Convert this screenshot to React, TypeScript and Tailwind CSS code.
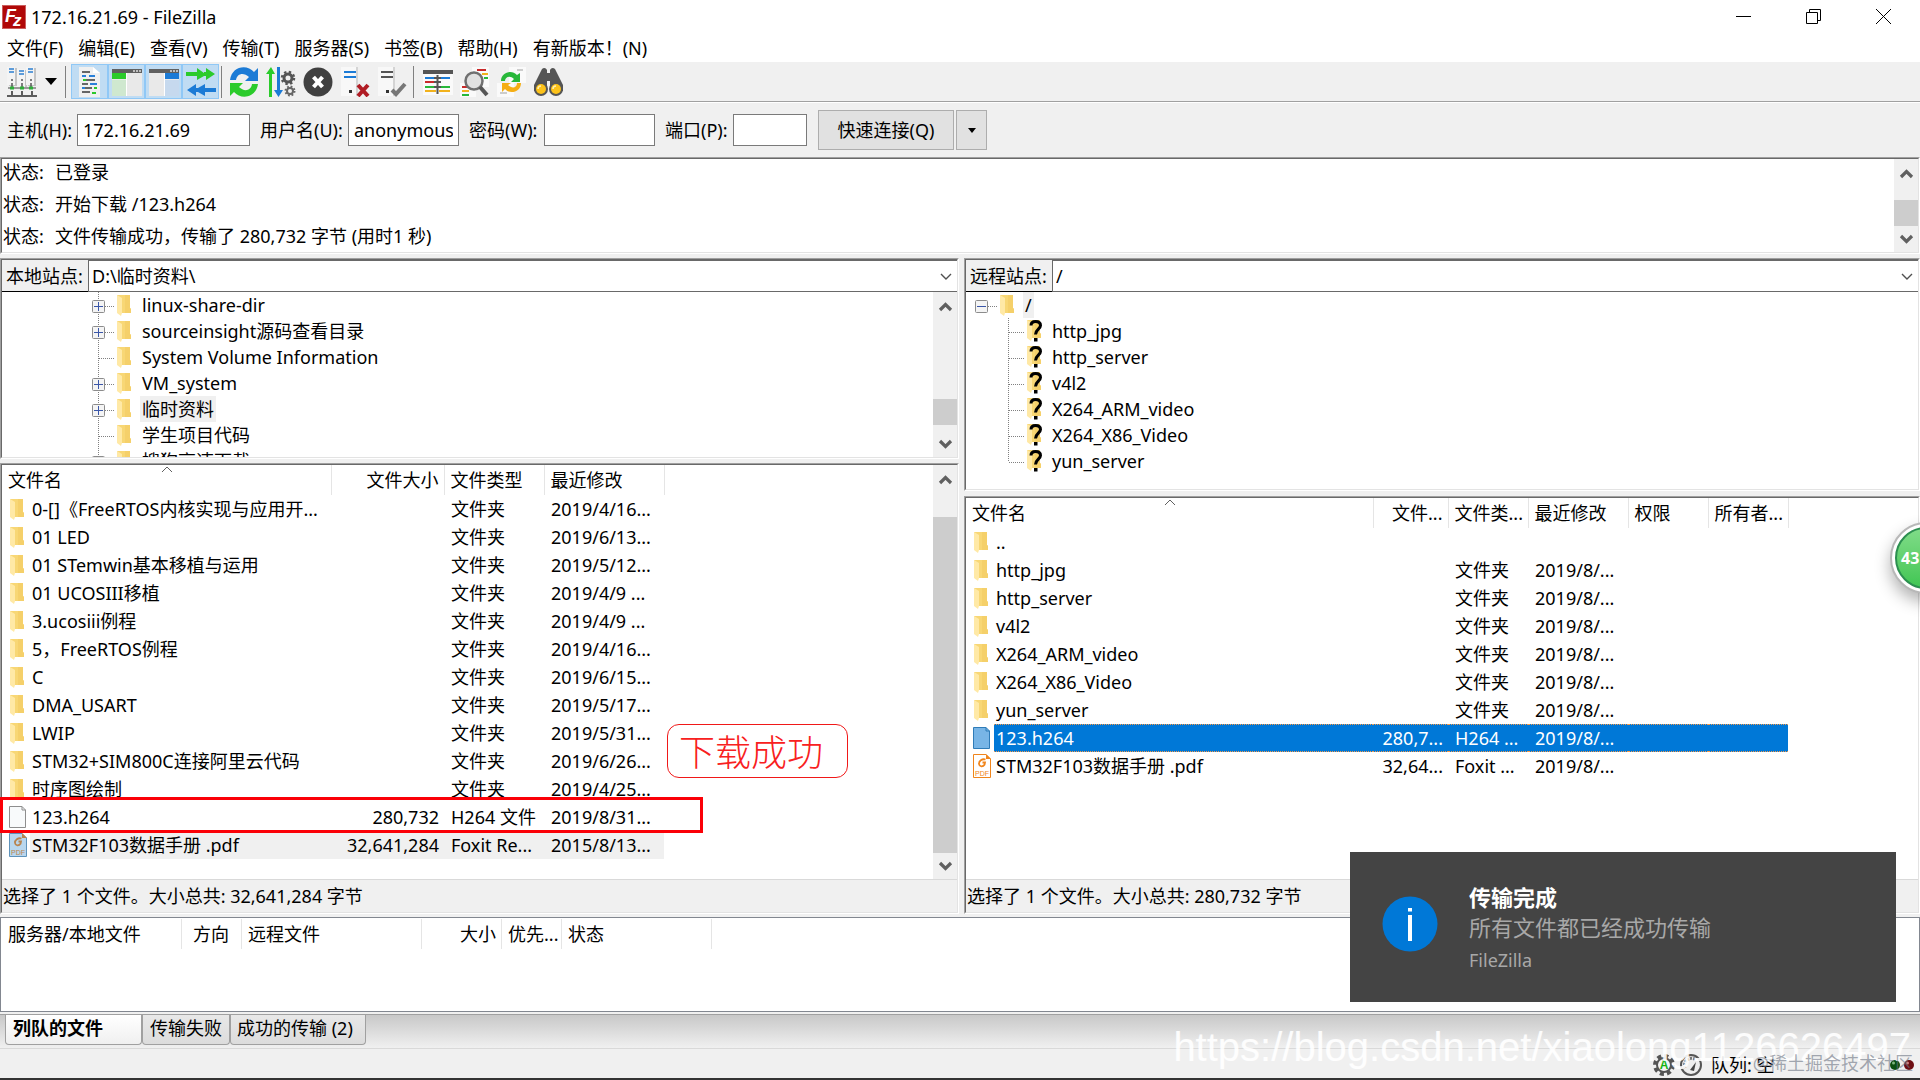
import React from "react";

type Kind = "folder" | "file" | "fileSelected" | "pdf" | "pdfSelected";

function FolderShape() {
  return (
    <>
      <path d="M0 0H13V13L14 14V18H4Z" fill="#f8d775" />
      <path d="M8 0H13V13L14 14V18H8Z" fill="#f5d06a" />
      <path d="M0 0L5 3V18L4 21L0 18Z" fill="#ffe9a6" />
    </>
  );
}

function FolderIcon() {
  return (
    <svg width="16" height="22" viewBox="0 -1 16 22" className="shrink-0" aria-hidden="true">
      <FolderShape />
    </svg>
  );
}

function UnknownFolderIcon() {
  return (
    <svg width="16" height="22" viewBox="0 0 16 22" className="shrink-0" aria-hidden="true">
      <FolderShape />
      <path d="M4 5.5C4 2.5 6 1.5 8.5 1.5C11.500 1.500 13.500 3 13.500 5.500C13.500 9 8.500 9.500 8.500 14.500" fill="none" stroke="#000" strokeWidth="3" />
      <rect x="7" y="18" width="3.500" height="3.500" fill="#000" />
    </svg>
  );
}

function FileIcon({ kind }: { kind: Kind }) {
  if (kind === "folder") return <FolderIcon />;
  if (kind === "file" || kind === "fileSelected") {
    const sel = kind === "fileSelected";
    return (
      <svg width="18" height="22" viewBox="0 0 18 22" className="shrink-0" aria-hidden="true">
        <path d="M.5 .5H13L16.500 4V21.500H.5Z" fill={sel ? "#78b5e6" : "#f8fafb"} stroke={sel ? "#2f7cb8" : "#8e8e8e"} />
        <path d="M13 .5V4H16.500" fill="none" stroke={sel ? "#2f7cb8" : "#8e8e8e"} />
      </svg>
    );
  }
  const sel = kind === "pdfSelected";
  const ink = sel ? "#b98550" : "#f0851c";
  return (
    <svg width="18" height="24" viewBox="0 0 18 24" className="shrink-0" aria-hidden="true">
      <path d="M.5 .5H13L17.500 5V23.500H.5Z" fill={sel ? "#b9d7ee" : "#fff"} stroke={sel ? "#5f93bb" : ink} />
      <path d="M13 0V5H18Z" fill={ink} />
      <path d="M12.500 5.500C9 4.500 5.800 7 6 10C6.300 12.800 10 13 11.500 10.800L12 8.500H9.500" fill="none" stroke={ink} strokeWidth="1.800" />
      <text x="9" y="22" fontSize="7" textAnchor="middle" fill={ink} fontFamily="Liberation Sans">PDF</text>
    </svg>
  );
}

function Connector({ box, line = "full" }: { box?: "plus" | "minus"; line?: "full" | "half" | "none" }) {
  return (
    <svg width="25" height="26" viewBox="0 0 25 26" className="shrink-0" aria-hidden="true">
      {line !== "none" && <path d={line === "full" ? "M6.500 0V26" : "M6.500 0V14"} stroke="#808080" strokeDasharray="1 1" />}
      <path d="M7 14.500H22" stroke="#808080" strokeDasharray="1 1" />
      {box && (
        <>
          <rect x=".5" y="8.500" width="12" height="12" rx="1" fill="#f4f4f4" stroke="#8c8c8c" />
          <path d={box === "plus" ? "M2 14.500H11M6.500 10V19" : "M2 14.500H11"} stroke="#3a56a8" />
        </>
      )}
    </svg>
  );
}

function Frame({ className = "", children }: { className?: string; children: React.ReactNode }) {
  return (
    <div className={`flex flex-col border border-t-[#a0a0a0] border-l-[#a0a0a0] border-r-white border-b-white ${className}`}>
      <div className="flex min-h-0 flex-1 flex-col border border-t-[#696969] border-l-[#696969] border-r-[#e3e3e3] border-b-[#e3e3e3] bg-white">
        {children}
      </div>
    </div>
  );
}

function ArrowUp() {
  return (
    <svg width="24" height="28" viewBox="0 0 24 28" className="block shrink-0" aria-hidden="true">
      <path d="M7 18L12.500 12.500L18 18" fill="none" stroke="#606060" strokeWidth="3.200" />
    </svg>
  );
}

function ArrowDown() {
  return (
    <svg width="24" height="26" viewBox="0 0 24 26" className="block shrink-0" aria-hidden="true">
      <path d="M7 10L12.500 15.500L18 10" fill="none" stroke="#606060" strokeWidth="3.200" />
    </svg>
  );
}

function Scrollbar({ before, thumb, after }: { before: string; thumb: string; after: string }) {
  return (
    <div className="flex w-6 shrink-0 flex-col bg-[#f0f0f0]">
      <ArrowUp />
      <div className={before} />
      <div className={`bg-[#cdcdcd] ${thumb}`} />
      <div className={after} />
      <ArrowDown />
    </div>
  );
}

function SiteRow({ id, label, value }: { id: string; label: string; value: string }) {
  return (
    <div className="flex h-8 shrink-0">
      <label htmlFor={id} className="flex w-[86px] items-center border-b border-black bg-[#f0f0f0] pl-1">{label}</label>
      <div className="relative flex-1 border-y border-l border-[#696969]">
        <select id={id} className="h-full w-full appearance-none bg-transparent pl-[3px]" defaultValue={value}>
          <option>{value}</option>
        </select>
        <svg width="12" height="8" viewBox="0 0 12 8" className="pointer-events-none absolute top-3 right-[5px]" aria-hidden="true">
          <path d="M1 1L6 6L11 1" fill="none" stroke="#505050" strokeWidth="1.400" />
        </svg>
      </div>
    </div>
  );
}

const localTree: { name: string; plus?: boolean; current?: boolean }[] = [
  { name: "linux-share-dir", plus: true },
  { name: "sourceinsight源码查看目录", plus: true },
  { name: "System Volume Information" },
  { name: "VM_system", plus: true },
  { name: "临时资料", plus: true, current: true },
  { name: "学生项目代码" },
  { name: "搜狗高速下载", plus: true },
];
const remoteTree = ["http_jpg", "http_server", "v4l2", "X264_ARM_video", "X264_X86_Video", "yun_server"];

type Row = { kind: Kind; name: string; cells: string[] };
const dir = (name: string, date: string): Row => ({ kind: "folder", name, cells: ["", "文件夹", date] });

const localRows: Row[] = [
  dir("0-[]《FreeRTOS内核实现与应用开...", "2019/4/16..."),
  dir("01 LED", "2019/6/13..."),
  dir("01 STemwin基本移植与运用", "2019/5/12..."),
  dir("01 UCOSIII移植", "2019/4/9 ..."),
  dir("3.ucosiii例程", "2019/4/9 ..."),
  dir("5，FreeRTOS例程", "2019/4/16..."),
  dir("C", "2019/6/15..."),
  dir("DMA_USART", "2019/5/17..."),
  dir("LWIP", "2019/5/31..."),
  dir("STM32+SIM800C连接阿里云代码", "2019/6/26..."),
  dir("时序图绘制", "2019/4/25..."),
  { kind: "file", name: "123.h264", cells: ["280,732", "H264 文件", "2019/8/31..."] },
  { kind: "pdfSelected", name: "STM32F103数据手册 .pdf", cells: ["32,641,284", "Foxit Re...", "2015/8/13..."] },
];
const remoteRows: Row[] = [
  { kind: "folder", name: "..", cells: ["", "", "", "", ""] },
  ...remoteTree.map((n): Row => ({ kind: "folder", name: n, cells: ["", "文件夹", "2019/8/...", "", ""] })),
  { kind: "fileSelected", name: "123.h264", cells: ["280,7...", "H264 ...", "2019/8/...", "", ""] },
  { kind: "pdf", name: "STM32F103数据手册 .pdf", cells: ["32,64...", "Foxit ...", "2019/8/...", "", ""] },
];

function FileTable({ heads, cols, rows }: { heads: string[]; cols: string[]; rows: Row[] }) {
  return (
    <table className="w-full table-fixed border-collapse">
      <colgroup>
        {cols.map((c, i) => <col key={i} className={c} />)}
        <col />
      </colgroup>
      <thead>
        <tr className="h-[30px]">
          {heads.map((h, i) => (
            <th key={h} className={`relative overflow-hidden border-r border-[#e5e5e5] p-0 font-normal whitespace-nowrap ${i === 1 ? "pr-[5px] text-right" : "pl-[6px] text-left"}`}>
              {h}
              {i === 0 && (
                <svg width="12" height="7" viewBox="0 0 12 7" className="absolute top-px left-1/2 -ml-[5px]" aria-hidden="true">
                  <path d="M1 6L6 1L11 6" fill="none" stroke="#606060" />
                </svg>
              )}
            </th>
          ))}
          <th className="p-0" />
        </tr>
      </thead>
      <tbody>
        {rows.map((r) => {
          const tone =
            r.kind === "fileSelected" ? "bg-[#0078d7] text-white border-y border-dotted border-[#f59a4a]" : r.kind === "pdfSelected" ? "bg-[#f0f0f0]" : "";
          return (
            <tr key={r.name} className="h-7">
              <td className="p-0">
                <div className="flex h-7 items-center">
                  <span className={`flex w-7 shrink-0 ${r.kind === "folder" ? "pl-2" : "pl-[7px]"}`}><FileIcon kind={r.kind} /></span>
                  <span className={`flex h-7 flex-1 items-center overflow-hidden pl-[2px] whitespace-nowrap ${tone}`}>{r.name}</span>
                </div>
              </td>
              {r.cells.map((c, i) => (
                <td key={i} className="p-0">
                  <div className={`flex h-7 items-center overflow-hidden whitespace-nowrap ${tone} ${i === 0 ? "justify-end pr-[5px]" : "pl-[7px]"}`}>{c}</div>
                </td>
              ))}
              <td className="p-0" />
            </tr>
          );
        })}
      </tbody>
    </table>
  );
}

function ToolIcon({ name }: { name: string }) {
  let body: React.ReactNode = null;
  switch (name) {
    case "站点管理器":
      body = (
        <>
          {[1, 11, 20].map((x, i) => (
            <g key={x}>
              <path d={`M${x + 1} ${i === 1 ? 3 : 1}h8v18h-8z`} fill="#c4c4c4" />
              <path d={`M${x - 1} ${i === 1 ? 2 : 0}h8v18h-8z`} fill="#f4f4f4" />
              <path d={`M${x + 1} ${i === 1 ? 4 : 2}h5M${x + 1} ${i === 1 ? 7 : 5}h5`} stroke="#2c7fd0" strokeWidth="1.500" />
              <path d={`M${x + 4} 12v2M${x + 4} 16v4`} stroke="#555" strokeWidth="1.500" />
            </g>
          ))}
          <path d="M1 21H29" stroke="#999" strokeWidth="2" />
          <path d="M3 21H7M13 21H17M22 21H26" stroke="#2fae3a" strokeWidth="3" />
          <path d="M0 29H30M5 29V24M15 29V24M25 29V24" stroke="#5c5c5c" strokeWidth="2" fill="none" />
        </>
      );
      break;
    case "消息日志":
      body = (
        <>
          <path d="M4 0H18L25 6V30H4Z" fill="#f0f0f0" />
          <path d="M18 0V6H25Z" fill="#fff" />
          <path d="M7 5h8M11 13h9M7 17h6M9 21h8M7 25h8" stroke="#666" strokeWidth="2" />
          <path d="M7 9h4M14 9h6M15 17h7M7 21h3" stroke="#2a80d8" strokeWidth="2" />
          <path d="M8 13h3M19 21h3M17 26h4" stroke="#2cc82c" strokeWidth="2" />
        </>
      );
      break;
    case "本地目录树":
    case "远程目录树": {
      const local = name === "本地目录树";
      body = (
        <>
          <path d="M0 2H30V29H0Z" fill="#e9e9e9" />
          <path d="M0 2H30V6H0Z" fill="#606060" />
          <path d="M21 4h2M24 4h2M27 4h2" stroke="#ddd" strokeWidth="1.500" />
          {local ? (
            <>
              <path d="M0 6H14V12H0Z" fill="#2bcb2b" />
              <path d="M0 13H14V29H0Z" fill="#cfe8cf" />
              <path d="M14.500 6V29" stroke="#fff" />
            </>
          ) : (
            <>
              <path d="M15 6H30V12H15Z" fill="#1c7bd6" />
              <path d="M16 13H30V29H16Z" fill="#c6d9ee" />
              <path d="M15.500 6V29" stroke="#fff" />
            </>
          )}
        </>
      );
      break;
    }
    case "传输队列":
      body = (
        <>
          <path d="M0 5H11V1L18 6V5H20V1L29 7L20 13V9H18L11 13V9H0Z" fill="#2bcb2b" />
          <path d="M30 21H19V17L12 21V21H10V17L1 23L10 29V25H12L19 29V25H30Z" fill="#1c7bd6" />
        </>
      );
      break;
    case "刷新":
      body = (
        <>
          <path d="M1 13C3 -1 18 -3 25 5L29 1V14H16L20 10C15 5 8 6 7 13Z" fill="#1c7bd6" />
          <path d="M29 17C27 31 12 33 5 25L1 29V16H14L10 20C15 25 22 24 23 17Z" fill="#2bcb2b" />
        </>
      );
      break;
    case "处理队列":
      body = (
        <>
          <path d="M3 30V7H0L5 0L9 7H6V30Z" fill="#2bcb2b" />
          <path d="M11 0H14V23H17L12.500 30L8 23H11Z" fill="#1c7bd6" />
          <circle cx="22" cy="11" r="4" fill="none" stroke="#555" strokeWidth="3" />
          <circle cx="22" cy="11" r="6" fill="none" stroke="#555" strokeWidth="2.500" strokeDasharray="2.360 2.360" />
          <circle cx="24" cy="24" r="3" fill="none" stroke="#666" strokeWidth="2" />
          <circle cx="24" cy="24" r="4.500" fill="none" stroke="#666" strokeWidth="2" strokeDasharray="1.770 1.770" />
        </>
      );
      break;
    case "取消":
      body = (
        <>
          <circle cx="15" cy="15" r="14.500" fill="#404040" />
          <path d="M10.500 10L19.500 20M19.500 10L10.500 20" stroke="#fff" strokeWidth="4" />
        </>
      );
      break;
    case "断开连接":
    case "重新连接": {
      const off = name === "断开连接";
      body = (
        <>
          <path d="M2 0H18V29H2Z" fill="#d4d4d4" />
          <path d="M1 0H16V29H1Z" fill="#f8f8f8" />
          <path d="M4 5H16M4 10H16" stroke={off ? "#1c7bd6" : "#555"} strokeWidth="2" />
          <rect x="9" y="23" width="3" height="3" fill="#333" />
          {off ? (
            <path d="M18 18L28 29M28 18L18 29" stroke="#b01c24" strokeWidth="4" />
          ) : (
            <path d="M15 23L19 27L28 17" fill="none" stroke="#777" strokeWidth="4" />
          )}
        </>
      );
      break;
    }
    case "目录比较":
      body = (
        <>
          <path d="M0 3H30V28H0Z" fill="#fafafa" />
          <path d="M0 3H30V7H0Z" fill="#555" />
          <path d="M2 11H13M16 11H27" stroke="#1c7bd6" strokeWidth="2" />
          <path d="M2 15H13" stroke="#c92a2a" strokeWidth="2" />
          <path d="M16 20H27" stroke="#28b83a" strokeWidth="2" />
          <path d="M2 20H13" stroke="#28b83a" strokeWidth="2" />
          <path d="M2 24H13M16 24H27" stroke="#f2b21c" strokeWidth="2" />
          <path d="M14.500 8V27M11 11H18M11 15H18M11 20H18" stroke="#555" strokeWidth="2" />
        </>
      );
      break;
    case "过滤器":
      body = (
        <>
          <path d="M12 0H29V20H12ZM0 16H16V30H0Z" fill="#fafafa" />
          <path d="M17 3H26M2 20H8" stroke="#c92a2a" strokeWidth="2" />
          <path d="M22 7H28M2 24H9" stroke="#f2b21c" strokeWidth="2" />
          <path d="M24 11H28M2 28H9" stroke="#28b83a" strokeWidth="2" />
          <circle cx="14" cy="14" r="8.500" fill="#dedede" fillOpacity=".9" stroke="#707070" strokeWidth="2.500" />
          <path d="M20 20L27 28" stroke="#555" strokeWidth="4" />
        </>
      );
      break;
    case "同步浏览":
      body = (
        <>
          <path d="M12 0H29V16H12ZM0 16H17V30H0Z" fill="#fafafa" />
          <path d="M20 3H26M3 26H10" stroke="#ccc" strokeWidth="2" />
          <path d="M4 14C4 5 15 2 20 8L23 6V15H14L17 12C13 8 8 10 8 14Z" fill="#28b83a" />
          <path d="M24 16C24 25 13 28 8 22L5 25V16H14L11 18C15 22 20 21 20 16Z" fill="#f5ae14" />
        </>
      );
      break;
    case "查找文件":
      body = (
        <>
          <path d="M8 2C10 0 12 1 13 3V6H16V3C17 1 19 0 21 2L29 18V24H16V14H13V24H0V18Z" fill="#555" />
          <circle cx="7" cy="22" r="7" fill="#555" />
          <circle cx="22" cy="22" r="7" fill="#555" />
          <circle cx="7" cy="22" r="5" fill="#fcc21a" />
          <circle cx="22" cy="22" r="5" fill="#fcc21a" />
          <path d="M4 22A3 3 0 0 1 7 19M19 22A3 3 0 0 1 22 19" stroke="#fff0b0" strokeWidth="1.500" fill="none" />
        </>
      );
      break;
  }
  return (
    <svg width="30" height="30" viewBox="0 0 30 30" aria-hidden="true">{body}</svg>
  );
}

function ToolButton({ name, pressed }: { name: string; pressed?: boolean }) {
  return (
    <button type="button" aria-label={name} title={name} className={`flex h-[35px] w-[37px] items-center justify-center ${pressed ? "border border-[#90c8f6] bg-[#c0dcf3]" : ""}`}>
      <ToolIcon name={name} />
    </button>
  );
}

function Field({ id, label, labelWidth, width, value }: { id: string; label: string; labelWidth: string; width: string; value: string }) {
  return (
    <div className="flex items-center">
      <label htmlFor={id} className={`${labelWidth} whitespace-nowrap`}>{label}</label>
      <input id={id} defaultValue={value} className={`h-8 border border-[#7a7a7a] bg-white px-[5px] outline-none ${width}`} />
    </div>
  );
}

const menus = ["文件(F)", "编辑(E)", "查看(V)", "传输(T)", "服务器(S)", "书签(B)", "帮助(H)", "有新版本！(N)"];
const logs = ["已登录", "开始下载 /123.h264", "文件传输成功，传输了 280,732 字节 (用时1 秒)"];
const queueHeads = [
  { t: "服务器/本地文件", c: "w-[181px] pl-[7px]" },
  { t: "方向", c: "w-[60px] justify-end pr-3" },
  { t: "远程文件", c: "w-[180px] pl-[6px]" },
  { t: "大小", c: "w-20 justify-end pr-[5px]" },
  { t: "优先...", c: "w-[60px] pl-[6px]" },
  { t: "状态", c: "w-[150px] pl-[6px]" },
];

export default function App() {
  return (
    <div className="relative flex h-screen flex-col overflow-hidden bg-[#f0f0f0] font-['Noto_Sans','Noto_Sans_CJK_SC',sans-serif] text-[18px] leading-6 text-black">
      <header className="bg-white">
        <div className="flex h-[33px] items-center pl-[2px]">
          <svg width="24" height="24" viewBox="0 0 24 24" aria-hidden="true">
            <rect width="24" height="24" fill="#b00808" />
            <rect x=".5" y=".5" width="23" height="23" fill="none" stroke="#fff" strokeOpacity=".7" strokeDasharray="1 1" />
            <text x="3" y="17" fontSize="18" fontWeight="700" fontStyle="italic" fill="#fff" fontFamily="Liberation Sans">F</text>
            <text x="11" y="21" fontSize="17" fontWeight="700" fontStyle="italic" fill="#fff" fontFamily="Liberation Sans">z</text>
          </svg>
          <h1 className="ml-[5px] flex-1">172.16.21.69 - FileZilla</h1>
          <div className="flex pr-[2px]">
            <button type="button" aria-label="最小化" className="flex h-8 w-[70px] items-center justify-center">
              <svg width="15" height="15" viewBox="0 0 15 15"><path d="M0 7.500H15" stroke="#000" /></svg>
            </button>
            <button type="button" aria-label="还原" className="flex h-8 w-[70px] items-center justify-center">
              <svg width="15" height="15" viewBox="0 0 15 15" fill="none" stroke="#000"><path d="M.5 3.500H11.500V14.500H.5ZM3.500 3.500V.5H14.500V11.500H11.500" /></svg>
            </button>
            <button type="button" aria-label="关闭" className="flex h-8 w-[70px] items-center justify-center">
              <svg width="15" height="15" viewBox="0 0 15 15" stroke="#000"><path d="M0 0L15 15M15 0L0 15" /></svg>
            </button>
          </div>
        </div>
        <nav className="flex h-[29px] items-center gap-[15px] pl-[7px]">
          {menus.map((m) => <button key={m} type="button" className="whitespace-nowrap">{m}</button>)}
        </nav>
      </header>

      <div className="flex h-[40px] shrink-0 items-center border-b border-[#a0a0a0] pl-[3px]">
        <ToolButton name="站点管理器" />
        <button type="button" aria-label="站点列表" className="flex h-[35px] w-[22px] items-center justify-center">
          <svg width="12" height="7" viewBox="0 0 12 7"><path d="M0 0H12L6 7Z" fill="#000" /></svg>
        </button>
        <div className="mr-[5px] ml-[3px] h-8 w-px bg-[#808080]" />
        {["消息日志", "本地目录树", "远程目录树", "传输队列"].map((n) => <ToolButton key={n} name={n} pressed />)}
        <div className="mr-[3px] ml-[2px] h-8 w-px bg-[#808080]" />
        {["刷新", "处理队列", "取消", "断开连接", "重新连接"].map((n) => <ToolButton key={n} name={n} />)}
        <div className="mr-[5px] ml-[3px] h-8 w-px bg-[#808080]" />
        {["目录比较", "过滤器", "同步浏览", "查找文件"].map((n) => <ToolButton key={n} name={n} />)}
      </div>

      <form className="flex h-[55px] shrink-0 items-center gap-[10px] border-t border-white pl-[7px]">
        <Field id="host" label="主机(H):" labelWidth="w-[70px]" width="w-[173px]" value="172.16.21.69" />
        <Field id="user" label="用户名(U):" labelWidth="w-[88px]" width="w-[111px]" value="anonymous" />
        <Field id="pass" label="密码(W):" labelWidth="w-[75px]" width="w-[111px]" value="" />
        <Field id="port" label="端口(P):" labelWidth="w-[68px]" width="w-[74px]" value="" />
        <div className="ml-px flex gap-[2px]">
          <button type="button" className="h-10 w-[136px] border border-[#adadad] bg-[#e1e1e1]">快速连接(Q)</button>
          <button type="button" aria-label="最近的服务器" className="flex h-10 w-[31px] items-center justify-center border border-[#adadad] bg-[#e1e1e1]">
            <svg width="8" height="5" viewBox="0 0 8 5"><path d="M0 0H8L4 5Z" fill="#000" /></svg>
          </button>
        </div>
      </form>

      <Frame className="h-[97px] shrink-0">
        <div className="flex h-full">
          <div className="flex flex-1 flex-col justify-end overflow-hidden">
            {logs.map((l) => (
              <p key={l} className="flex h-8 shrink-0 items-center pl-px whitespace-nowrap"><span className="w-[52px]">状态:</span>{l}</p>
            ))}
          </div>
          <Scrollbar before="flex-1" thumb="h-[26px]" after="h-0" />
        </div>
      </Frame>

      <main className="mt-1 grid min-h-0 flex-1 grid-cols-[minmax(0,959fr)_minmax(0,956fr)] gap-[5px]">
        <section className="flex min-h-0 flex-col gap-1">
          <Frame className="h-[201px] shrink-0">
            <SiteRow id="local" label="本地站点:" value={"D:\\临时资料\\"} />
            <div className="flex min-h-0 flex-1">
              <ul className="flex-1 overflow-hidden pl-[90px]">
                {localTree.map((t) => (
                  <li key={t.name} className="flex h-[26px] items-center">
                    <Connector box={t.plus ? "plus" : undefined} />
                    <FolderIcon />
                    <span className={`ml-[7px] h-[26px] px-[2px] leading-[26px] ${t.current ? "bg-[#f0f0f0]" : ""}`}>{t.name}</span>
                  </li>
                ))}
              </ul>
              <Scrollbar before="flex-1" thumb="h-[26px]" after="h-[6px]" />
            </div>
          </Frame>
          <div className="relative flex min-h-0 flex-1 flex-col">
            <Frame className="min-h-0 flex-1">
              <div className="flex min-h-0 flex-1">
                <div className="flex-1 overflow-hidden">
                  <FileTable heads={["文件名", "文件大小", "文件类型", "最近修改"]} cols={["w-[329px]", "w-[113px]", "w-[100px]", "w-[120px]"]} rows={localRows} />
                </div>
                <Scrollbar before="h-6" thumb="flex-1" after="h-0" />
              </div>
              <p className="flex h-[33px] shrink-0 items-center border-t border-[#d9d9d9] bg-[#f0f0f0] pl-px">选择了 1 个文件。大小总共: 32,641,284 字节</p>
            </Frame>
            <div className="absolute top-[334px] left-0 h-9 w-[703px] border-[3px] border-[#fb0007]" />
            <div className="absolute top-[261px] left-[667px] flex h-[54px] w-[181px] items-center rounded-xl border border-[#f01818] pt-1 pl-[11px] text-[36px] font-light text-[#f82020]">下载成功</div>
          </div>
        </section>
        <section className="flex min-h-0 flex-col gap-[5px]">
          <Frame className="h-[233px] shrink-0">
            <SiteRow id="remote" label="远程站点:" value="/" />
            <div className="flex h-[26px] items-center pl-[9px]">
              <Connector box="minus" line="none" />
              <FolderIcon />
              <span className="ml-[7px] h-[26px] bg-[#f0f0f0] px-[2px] leading-[26px]">/</span>
            </div>
            <ul className="pl-9">
              {remoteTree.map((t, i) => (
                <li key={t} className="flex h-[26px] items-center">
                  <Connector line={i === remoteTree.length - 1 ? "half" : "full"} />
                  <UnknownFolderIcon />
                  <span className="ml-[7px] px-[2px] leading-[26px]">{t}</span>
                </li>
              ))}
            </ul>
          </Frame>
          <Frame className="min-h-0 flex-1">
            <div className="min-h-0 flex-1 overflow-hidden">
              <FileTable
                heads={["文件名", "文件...", "文件类...", "最近修改", "权限", "所有者..."]}
                cols={["w-[407px]", "w-[75px]", "w-[80px]", "w-[100px]", "w-20", "w-20"]}
                rows={remoteRows}
              />
            </div>
            <p className="flex h-[33px] shrink-0 items-center border-t border-[#d9d9d9] bg-[#f0f0f0] pl-px">选择了 1 个文件。大小总共: 280,732 字节</p>
          </Frame>
        </section>
      </main>

      <section className="mt-[3px] h-[95px] shrink-0 border border-[#828790] bg-white pt-px">
        <div className="flex h-[30px]">
          {queueHeads.map((h) => (
            <div key={h.t} className={`flex items-center border-r border-[#e5e5e5] whitespace-nowrap ${h.c}`}>{h.t}</div>
          ))}
        </div>
      </section>

      <div className="mt-[2px] flex h-[34px] shrink-0 items-start border-t border-[#a0a0a0] bg-linear-to-b from-[#c8c8c8] to-[#f0f0f0] pl-[5px]" role="tablist">
        <button type="button" role="tab" aria-selected="true" className="h-[30px] w-[137px] rounded-b border border-t-0 border-[#a0a0a0] bg-linear-to-b from-white to-[#f0f0f0] pb-1 pl-[7px] text-left font-bold">列队的文件</button>
        <button type="button" role="tab" aria-selected="false" className="h-[30px] w-[88px] rounded-b border border-t-0 border-[#a0a0a0] bg-linear-to-b from-[#e8e8e8] to-[#dcdcdc] pb-1 whitespace-nowrap">传输失败</button>
        <button type="button" role="tab" aria-selected="false" className="h-[30px] w-[136px] rounded-b border border-t-0 border-[#a0a0a0] bg-linear-to-b from-[#e8e8e8] to-[#dcdcdc] pb-1 pl-[6px] text-left whitespace-nowrap">成功的传输 (2)</button>
      </div>

      <footer className="relative flex h-[32px] shrink-0 items-center justify-end border-t border-b-2 border-t-[#d9d9d9] border-b-[#333] pt-[2px] pr-1">
        <svg width="22" height="22" viewBox="0 0 22 22" aria-hidden="true">
          <circle cx="11" cy="11" r="9" fill="none" stroke="#555" strokeWidth="4" strokeDasharray="4 3.070" />
          <circle cx="11" cy="11" r="7" fill="#f4f4f4" stroke="#555" strokeWidth="2" />
          <text x="11" y="15" fontSize="12" fontWeight="700" textAnchor="middle" fill="#12b312" fontFamily="Liberation Sans">A</text>
        </svg>
        <svg width="24" height="22" viewBox="0 0 24 22" className="ml-1" aria-hidden="true">
          <circle cx="12" cy="11" r="10" fill="#eee" stroke="#555" strokeWidth="2" />
          <path d="M6 14A7 7 0 0 1 17 6" stroke="#777" strokeWidth="3" fill="none" strokeDasharray="2 1" />
          <path d="M11 16L17 8L15 17Z" fill="#444" />
        </svg>
        <span className="ml-2 w-[178px]">队列: 空</span>
        <svg width="27" height="12" viewBox="0 0 27 12" aria-hidden="true">
          <circle cx="6" cy="6" r="5" fill="#0c5010" />
          <circle cx="20" cy="6" r="5" fill="#6e0e12" />
          <circle cx="4.500" cy="4" r="1.500" fill="#7fb57f" />
          <circle cx="18.500" cy="4" r="1.500" fill="#c98080" />
        </svg>
      </footer>

      <div className="pointer-events-none absolute right-[9px] bottom-[10px] font-['Liberation_Sans',sans-serif] text-[40px] leading-[46px] whitespace-nowrap text-white/90">https://blog.csdn.net/xiaolong1126626497</div>
      <div className="pointer-events-none absolute right-[7px] bottom-[5px] whitespace-nowrap text-gray-500/60">@稀土掘金技术社区</div>

      <div className="absolute top-[522px] -right-[42px] flex h-[72px] w-[72px] items-center rounded-full border-2 border-[#b8b8b8] bg-white p-[3px] shadow-[0_8px_16px_rgba(0,0,0,0.3)]">
        <div className="flex h-full w-full items-center rounded-full border-2 border-[#2c8f50] bg-linear-to-b from-[#7fdc88] to-[#3fc653] pl-1 text-[16px] font-bold text-white">43</div>
      </div>

      <aside className="absolute right-6 bottom-[78px] flex h-[150px] w-[546px] bg-[#444]">
        <svg width="56" height="56" viewBox="0 0 56 56" className="mt-[44px] ml-8 shrink-0" aria-hidden="true">
          <circle cx="28" cy="28" r="27.500" fill="#0078d7" />
          <path d="M28 19V45M28 12V15.500" stroke="#fff" strokeWidth="4" />
        </svg>
        <div className="mt-[30px] ml-[31px]">
          <h2 className="text-[22px] leading-[30px] font-bold text-white">传输完成</h2>
          <p className="text-[22px] leading-[30px] text-[#a8a8a8]">所有文件都已经成功传输</p>
          <p className="mt-1 text-[18px] leading-7 text-[#a8a8a8]">FileZilla</p>
        </div>
      </aside>
    </div>
  );
}
